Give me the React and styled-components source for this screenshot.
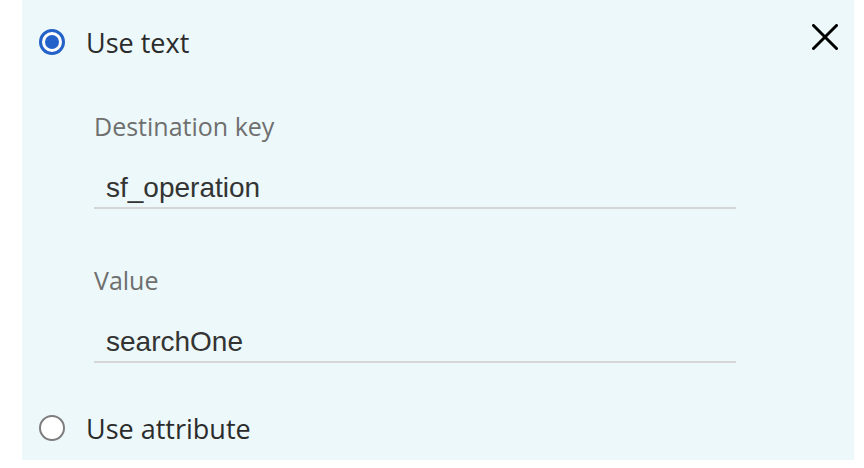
import React, { useState } from "react";
import styled, { createGlobalStyle } from "styled-components";

const GlobalStyle = createGlobalStyle`
  body {
    margin: 0;
    background: #ffffff;
    font-family: "Open Sans", "Liberation Sans", sans-serif;
  }
`;

const Panel = styled.div`
  margin-left: 22px;
  width: 832px;
  height: 460px;
  background: #ecf8f9;
  display: flex;
  flex-direction: column;
  box-sizing: border-box;
  padding: 21px 14px 0 17px;
`;

const TopRow = styled.div`
  display: flex;
  justify-content: space-between;
  align-items: flex-start;
`;

const RadioLabel = styled.label`
  display: flex;
  align-items: center;
  gap: 21px;
  font-size: 27px;
  color: #2b2b2b;
  height: 42px;
  cursor: pointer;
`;

const Circle = styled.span`
  width: 26px;
  height: 26px;
  flex: none;
  border-radius: 50%;
  box-sizing: border-box;
  background: #ffffff;
  border: ${(p) => (p.$checked ? "3px solid #2462c9" : "2px solid #7d7d7d")};
  display: flex;
  align-items: center;
  justify-content: center;

  &::after {
    content: "";
    width: 14px;
    height: 14px;
    border-radius: 50%;
    background: #2462c9;
    display: ${(p) => (p.$checked ? "block" : "none")};
  }
`;

const CloseButton = styled.button`
  border: none;
  background: none;
  padding: 0;
  margin-top: 1px;
  width: 30px;
  height: 30px;
  display: flex;
  align-items: center;
  justify-content: center;
  cursor: pointer;
`;

const Fields = styled.div`
  display: flex;
  flex-direction: column;
  margin-left: 55px;
  margin-top: 47px;
  gap: 55px;
`;

const Field = styled.div`
  display: flex;
  flex-direction: column;
`;

const FieldLabel = styled.div`
  font-size: 25px;
  color: #6f6f6f;
  line-height: 32px;
`;

const TextInput = styled.input`
  margin-top: 23px;
  width: 642px;
  height: 44px;
  box-sizing: border-box;
  border: none;
  border-bottom: 2px solid #d6d6d6;
  background: transparent;
  outline: none;
  padding: 3px 12px 0;
  font-family: "Liberation Sans", Arial, sans-serif;
  font-size: 28px;
  color: #333333;
`;

const BottomRow = styled.div`
  margin-top: 44px;
`;

function Radio({ checked, onSelect, children }) {
  return (
    <RadioLabel onClick={onSelect}>
      <Circle $checked={checked} />
      {children}
    </RadioLabel>
  );
}

function App() {
  const [mode, setMode] = useState("text");
  const [destKey, setDestKey] = useState("sf_operation");
  const [value, setValue] = useState("searchOne");

  return (
    <>
      <GlobalStyle />
      <Panel>
        <TopRow>
          <Radio checked={mode === "text"} onSelect={() => setMode("text")}>
            Use text
          </Radio>
          <CloseButton aria-label="Close">
            <svg width="26" height="26" viewBox="0 0 26 26">
              <path
                d="M1.5 1.5 L24.5 24.5 M24.5 1.5 L1.5 24.5"
                stroke="#000"
                strokeWidth="3"
                strokeLinecap="round"
              />
            </svg>
          </CloseButton>
        </TopRow>
        <Fields>
          <Field>
            <FieldLabel>Destination key</FieldLabel>
            <TextInput value={destKey} onChange={(e) => setDestKey(e.target.value)} />
          </Field>
          <Field>
            <FieldLabel>Value</FieldLabel>
            <TextInput value={value} onChange={(e) => setValue(e.target.value)} />
          </Field>
        </Fields>
        <BottomRow>
          <Radio checked={mode === "attribute"} onSelect={() => setMode("attribute")}>
            Use attribute
          </Radio>
        </BottomRow>
      </Panel>
    </>
  );
}

export default App;
